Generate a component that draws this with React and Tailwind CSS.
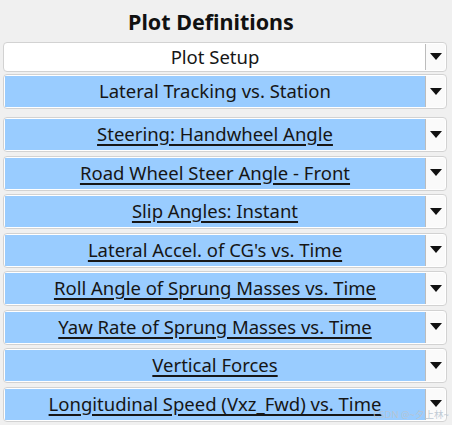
import React from 'react';

const plots = [
  'Steering: Handwheel Angle',
  'Road Wheel Steer Angle - Front',
  'Slip Angles: Instant',
  "Lateral Accel. of CG's vs. Time",
  'Roll Angle of Sprung Masses vs. Time',
  'Yaw Rate of Sprung Masses vs. Time',
  'Vertical Forces',
  'Longitudinal Speed (Vxz_Fwd) vs. Time',
];

function Caret() {
  return (
    <svg width="12" height="8" viewBox="0 0 12 8">
      <path d="M0 0H12L6 7Z" fill="#111" />
    </svg>
  );
}

function Combo({ label, blue = true, underline = false, tall = true }) {
  return (
    <div className={`flex rounded-[4px] border border-[#d2d2d2] bg-white p-px ${tall ? 'h-[35px]' : 'h-[30px]'}`}>
      <div className={`flex flex-1 items-center justify-center ${blue ? 'bg-[#99ccff]' : 'bg-white'}`}>
        <span className={`text-[18.5px] leading-none text-[#161616] ${underline ? 'underline underline-offset-[3px] decoration-[1.5px]' : ''}`}>{label}</span>
      </div>
      <div className="flex w-[20px] items-center justify-center border-l border-[#bcbcbc] bg-[#fafafa]">
        <Caret />
      </div>
    </div>
  );
}

export default function App() {
  return (
    <div className="relative h-[425px] w-[452px] overflow-hidden bg-[#f0f0f0] pl-[3px] pr-[5px]" style={{ fontFamily: '"Noto Sans", "Open Sans", sans-serif' }}>
      <div className="flex h-[42px] items-center justify-center pr-[28px] pt-[3px] text-[21.5px] font-bold text-[#111]">Plot Definitions</div>
      <div className="flex flex-col gap-[2px]">
        <Combo label="Plot Setup" blue={false} tall={false} />
        <Combo label="Lateral Tracking vs. Station" />
      </div>
      <div className="mt-[8px] flex flex-col gap-[3.5px]">
        {plots.map((p) => (
          <Combo key={p} label={p} underline />
        ))}
      </div>
      {/* watermark */}
      <span className="absolute bottom-[6px] right-[3px] text-[9.5px] leading-none text-[#b8c4d0]/90" style={{ fontFamily: '"Noto Sans", "Noto Sans CJK SC", sans-serif' }}>CSDN @~夕上林~</span>
    </div>
  );
}
